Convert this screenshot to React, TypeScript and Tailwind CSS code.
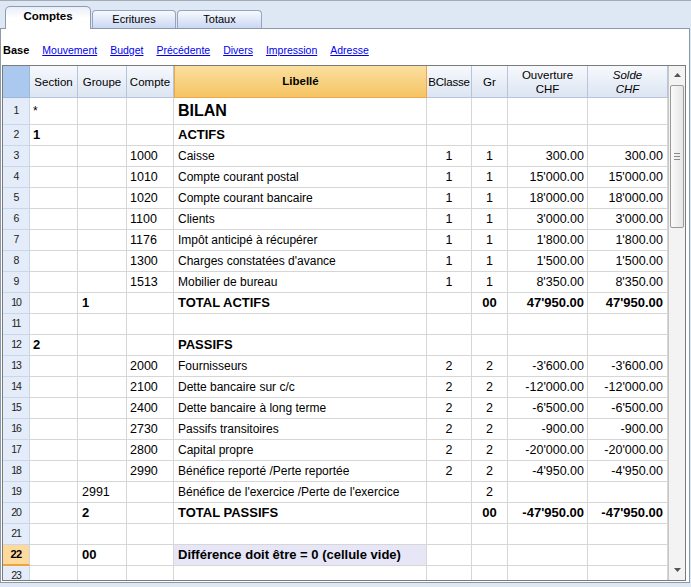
import React from "react";

type Row = {
  n: number;
  s?: string;
  sb?: boolean;
  g?: string;
  gb?: boolean;
  c?: string;
  l?: string;
  big?: boolean;
  lb?: boolean;
  b?: string;
  gr?: string;
  grb?: boolean;
  o?: string;
  d?: string;
  nb?: boolean;
  sel?: boolean;
};

const rows: Row[] = [
  { n: 1, s: "*", l: "BILAN", big: true },
  { n: 2, s: "1", sb: true, l: "ACTIFS", lb: true },
  { n: 3, c: "1000", l: "Caisse", b: "1", gr: "1", o: "300.00", d: "300.00" },
  { n: 4, c: "1010", l: "Compte courant postal", b: "1", gr: "1", o: "15'000.00", d: "15'000.00" },
  { n: 5, c: "1020", l: "Compte courant bancaire", b: "1", gr: "1", o: "18'000.00", d: "18'000.00" },
  { n: 6, c: "1100", l: "Clients", b: "1", gr: "1", o: "3'000.00", d: "3'000.00" },
  { n: 7, c: "1176", l: "Impôt anticipé à récupérer", b: "1", gr: "1", o: "1'800.00", d: "1'800.00" },
  { n: 8, c: "1300", l: "Charges constatées d'avance", b: "1", gr: "1", o: "1'500.00", d: "1'500.00" },
  { n: 9, c: "1513", l: "Mobilier de bureau", b: "1", gr: "1", o: "8'350.00", d: "8'350.00" },
  { n: 10, g: "1", gb: true, l: "TOTAL ACTIFS", lb: true, gr: "00", grb: true, o: "47'950.00", d: "47'950.00", nb: true },
  { n: 11 },
  { n: 12, s: "2", sb: true, l: "PASSIFS", lb: true },
  { n: 13, c: "2000", l: "Fournisseurs", b: "2", gr: "2", o: "-3'600.00", d: "-3'600.00" },
  { n: 14, c: "2100", l: "Dette bancaire sur c/c", b: "2", gr: "2", o: "-12'000.00", d: "-12'000.00" },
  { n: 15, c: "2400", l: "Dette bancaire à long terme", b: "2", gr: "2", o: "-6'500.00", d: "-6'500.00" },
  { n: 16, c: "2730", l: "Passifs transitoires", b: "2", gr: "2", o: "-900.00", d: "-900.00" },
  { n: 17, c: "2800", l: "Capital propre", b: "2", gr: "2", o: "-20'000.00", d: "-20'000.00" },
  { n: 18, c: "2990", l: "Bénéfice reporté /Perte reportée", b: "2", gr: "2", o: "-4'950.00", d: "-4'950.00" },
  { n: 19, g: "2991", l: "Bénéfice de l'exercice /Perte de l'exercice", gr: "2" },
  { n: 20, g: "2", gb: true, l: "TOTAL PASSIFS", lb: true, gr: "00", grb: true, o: "-47'950.00", d: "-47'950.00", nb: true },
  { n: 21 },
  { n: 22, g: "00", gb: true, l: "Différence doit être = 0 (cellule vide)", lb: true, sel: true },
  { n: 23 },
];

const cols =
  "grid grid-cols-[27px_48px_49px_47px_253px_45px_36px_80px_80px]";

const cell =
  "border-r border-b border-[#d6d6d6] flex items-center overflow-hidden whitespace-nowrap text-black";

function DataRow({ r }: { r: Row }) {
  const h = r.n === 1 ? "h-[27px]" : "h-[21px]";
  const reg = "text-[12px]";
  const num = "text-[12.5px]";
  const bold = "text-[13px] font-bold";
  return (
    <div className={`${cols} ${h}`}>
      <div
        className={
          r.sel
            ? "border-r border-[#c9d6e8] border-b-2 border-b-[#f0a33c] bg-[#fdd99b] flex items-center justify-center text-[11px] font-bold tracking-[-0.5px] text-black"
            : "border-r border-b border-[#c9d6e8] bg-[#e3ecf8] flex items-center justify-center text-[10.5px] tracking-[-1px] text-[#222]"
        }
      >
        {r.n}
      </div>
      <div className={`${cell} pl-[3px] ${r.sb ? bold : reg}`}>{r.s}</div>
      <div className={`${cell} pl-[4px] ${r.gb ? bold : num}`}>{r.g}</div>
      <div className={`${cell} pl-[3px] ${num}`}>{r.c}</div>
      <div
        className={`${cell} pl-[4px] ${
          r.big ? "text-[16px] font-bold" : r.lb ? bold : reg
        } ${r.sel ? "bg-[#e6e6f7]" : ""}`}
      >
        {r.l}
      </div>
      <div className={`${cell} justify-center ${num}`}>{r.b}</div>
      <div className={`${cell} justify-center ${r.grb ? bold : num}`}>{r.gr}</div>
      <div className={`${cell} justify-end pr-[3px] ${r.nb ? bold : num}`}>{r.o}</div>
      <div className={`${cell} justify-end pr-[4px] ${r.nb ? bold : num}`}>{r.d}</div>
    </div>
  );
}

const hcell =
  "border-r border-b border-[#b4c5dc] bg-gradient-to-b from-[#f7f9fd] to-[#dce5f2] flex flex-col items-center justify-center text-[11.5px] leading-[14px] text-black whitespace-nowrap overflow-hidden";

function Header() {
  return (
    <div className={`${cols} h-[32px]`}>
      <div className="bg-[#abc8ee] border-r border-b border-[#9fb8da]" />
      <div className={hcell}>Section</div>
      <div className={hcell}>Groupe</div>
      <div className={hcell}>Compte</div>
      <div className="border-x border-b border-[#eea649] bg-gradient-to-b from-[#fadf9f] to-[#f5c462] flex items-center justify-center text-[11.5px] font-bold text-black">
        Libellé
      </div>
      <div className={`${hcell} tracking-[-0.2px]`}>BClasse</div>
      <div className={hcell}>Gr</div>
      <div className={hcell}>
        <span>Ouverture</span>
        <span>CHF</span>
      </div>
      <div className={`${hcell} italic text-[#5a5a5a]`}>
        <span>Solde</span>
        <span>CHF</span>
      </div>
    </div>
  );
}

function Scrollbar() {
  return (
    <div className="w-[17px] h-full flex flex-col bg-[#f3f3f3] border-l border-[#c8c8c8]">
      <div className="h-[18px] flex items-center justify-center">
        <svg width="7" height="4" viewBox="0 0 7 4">
          <path d="M3.5 0 L7 4 L0 4 Z" fill="#555" />
        </svg>
      </div>
      <div className="flex-1 px-[1px] pt-[1px]">
        <div className="h-[143px] rounded-[2px] border border-[#9a9a9a] bg-gradient-to-r from-[#fafafa] to-[#e6e6e6] flex flex-col items-center justify-center gap-[2px]">
          <div className="w-[6px] h-px bg-[#8a8a8a]" />
          <div className="w-[6px] h-px bg-[#8a8a8a]" />
          <div className="w-[6px] h-px bg-[#8a8a8a]" />
        </div>
      </div>
      <div className="h-[18px] flex items-center justify-center pb-[2px]">
        <svg width="7" height="4" viewBox="0 0 7 4">
          <path d="M0 0 L7 0 L3.5 4 Z" fill="#555" />
        </svg>
      </div>
    </div>
  );
}

export default function App() {
  const links = ["Mouvement", "Budget", "Précédente", "Divers", "Impression", "Adresse"];
  return (
    <div className="w-[691px] h-[587px] bg-[#dde8f4] border-t border-[#a3abb8] overflow-hidden font-['Liberation_Sans',Arial,sans-serif]">
      {/* tabs */}
      <div className="h-[27px] flex items-end pl-[5px] gap-[1px] relative z-10">
        <div className="w-[86px] h-[23px] -mb-px bg-gradient-to-b from-[#e9eef8] via-white to-white border border-b-0 border-[#8c9bb3] rounded-t-[5px] flex items-center justify-center pb-[3px] text-[11.5px] font-bold text-black">
          Comptes
        </div>
        <div className="w-[84px] h-[18px] bg-gradient-to-b from-[#f7f9fe] to-[#cbd8f3] border border-b-0 border-[#94a5c2] rounded-t-[4px] flex items-center justify-center text-[11px] text-black">
          Ecritures
        </div>
        <div className="w-[85px] h-[18px] bg-gradient-to-b from-[#f7f9fe] to-[#cbd8f3] border border-b-0 border-[#94a5c2] rounded-t-[4px] flex items-center justify-center text-[11px] text-black">
          Totaux
        </div>
      </div>
      {/* frame */}
      <div className="w-[690px] h-[555px] bg-white border border-[#8d99a8]">
        <div className="h-[36px] pl-[2px] pt-[15px] flex items-start gap-[13px] leading-[13px]">
          <span className="text-[11px] font-bold text-black">Base</span>
          {links.map((l) => (
            <span key={l} className="text-[10.5px] text-[#0000ee] underline">
              {l}
            </span>
          ))}
        </div>
        <div className="ml-[1px] w-[684px] h-[516px] border border-[#7b7b7b] flex overflow-hidden">
          <div className="w-[665px] h-full overflow-hidden">
            <Header />
            {rows.map((r) => (
              <DataRow key={r.n} r={r} />
            ))}
          </div>
          <Scrollbar />
        </div>
      </div>
    </div>
  );
}
